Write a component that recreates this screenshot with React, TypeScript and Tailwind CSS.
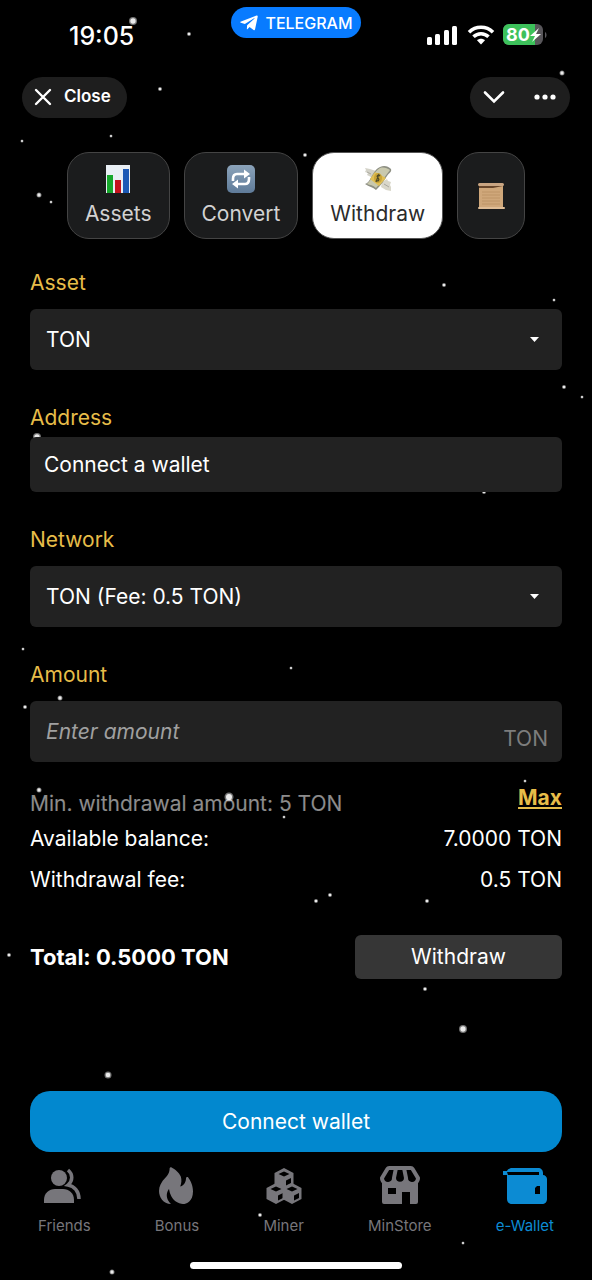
import type { ReactNode } from "react";
import { FaTelegramPlane } from "react-icons/fa";
import { BiSolidHot } from "react-icons/bi";

const stars = [
  [133, 21, 8], [189, 34, 4], [160, 89, 4], [22, 141, 3], [111, 136, 3], [562, 73, 5],
  [39, 195, 5], [51, 202, 3], [305, 155, 4], [444, 285, 4], [554, 300, 3], [564, 387, 4],
  [582, 397, 3], [37, 437, 8], [484, 492, 4], [23, 649, 3], [291, 668, 3], [60, 698, 5],
  [25, 707, 4], [39, 790, 5], [525, 781, 3], [229, 797, 9], [284, 817, 3], [316, 901, 4],
  [330, 895, 4], [427, 901, 4], [9, 955, 4], [425, 989, 4], [463, 1029, 8], [108, 1075, 7],
  [260, 1215, 4], [463, 1243, 3], [112, 1272, 5],
];

const Stars = () => (
  <svg className="pointer-events-none absolute left-0 top-0 h-[1280px] w-[592px]" viewBox="0 0 592 1280" aria-hidden="true">
    {stars.map(([x, y, d]) => (
      <g key={`${x}-${y}`} fill="#fff">
        <circle cx={x} cy={y} r={d / 2} opacity="0.45" />
        <circle cx={x} cy={y} r={d / 3} opacity="0.85" />
      </g>
    ))}
  </svg>
);

const StatusBar = () => (
  <header className="grid h-[70px] grid-cols-[1fr_auto_1fr] items-start">
    <time className="pl-[69px] pt-5 text-[25px] font-medium leading-8">19:05</time>
    <a href="#telegram" className="mt-[7px] flex h-[31px] items-center gap-[6px] rounded-full bg-[#087bff] px-2 text-[16px] font-medium">
      <FaTelegramPlane className="size-5" />
      TELEGRAM
    </a>
    <div className="flex items-center justify-end gap-2 pr-[45px] pt-6">
      <svg className="h-5 w-8" viewBox="0 0 32 20" fill="#fff" aria-label="Signal">
        <rect x="0" y="12" width="5" height="8" rx="1.5" />
        <rect x="8" y="9" width="5" height="11" rx="1.5" />
        <rect x="17" y="5" width="5" height="15" rx="1.5" />
        <rect x="25" y="1" width="5" height="19" rx="1.5" />
      </svg>
      <svg className="h-5 w-7" viewBox="0 0 28 20" fill="none" stroke="#fff" strokeWidth="3.6" aria-label="Wi-Fi">
        <path d="M2 7.2C8.8.6 19.2.6 26 7.2" />
        <path d="M6.5 11.8c4.3-4.1 10.7-4.1 15 0" />
        <path d="M10 15.3c2.4-2 5.6-2 8 0L14 19.4z" fill="#fff" stroke="none" />
      </svg>
      <svg className="h-[21px] w-11" viewBox="0 0 44 21" aria-label="Battery 80%">
        <defs>
          <clipPath id="cell"><rect width="40" height="21" rx="6" /></clipPath>
        </defs>
        <g clipPath="url(#cell)">
          <rect width="40" height="21" fill="#58565a" />
          <rect width="32" height="21" fill="#3dc15b" />
        </g>
        <path d="M42 8c2 1 2 5 0 6z" fill="#58565a" />
        <text x="3" y="17" fill="#fff" fontSize="18" fontWeight="700" className="font-['Inter']">80</text>
        <path d="M36 4l-9 8h5l-3 6 9-8h-5z" fill="#fff" />
      </svg>
    </div>
  </header>
);

const AppBar = () => (
  <div className="flex h-[54px] items-center justify-between px-[22px]">
    <button className="flex h-[41px] items-center gap-3 rounded-full bg-[#1e1e1e] pl-3 pr-4 text-[17px] font-semibold">
      <svg className="size-[18px]" viewBox="0 0 18 18" stroke="#fff" strokeWidth="2.4" strokeLinecap="round">
        <path d="M2 2l14 14M16 2L2 16" />
      </svg>
      Close
    </button>
    <div className="flex h-[41px] items-center gap-7 rounded-full bg-[#1e1e1e] px-3">
      <button aria-label="Minimize">
        <svg className="h-4 w-6" viewBox="0 0 24 16" fill="none" stroke="#fff" strokeWidth="2.6" strokeLinecap="round">
          <path d="M3 3.5l9 9 9-9" />
        </svg>
      </button>
      <button aria-label="More">
        <svg className="h-4 w-6" viewBox="0 0 24 16" fill="#fff">
          <circle cx="3" cy="8" r="2.6" />
          <circle cx="11" cy="8" r="2.6" />
          <circle cx="19" cy="8" r="2.6" />
        </svg>
      </button>
    </div>
  </div>
);

const ChartIcon = () => (
  <svg className="size-7" viewBox="0 0 28 28" aria-hidden="true">
    <rect x="2" width="24" height="28" fill="#e9eff5" />
    <rect x="3" y="10" width="6" height="18" fill="#16a82c" />
    <rect x="11" y="15" width="6" height="13" fill="#c3131c" />
    <rect x="19" y="4" width="6" height="24" fill="#1c59b5" />
  </svg>
);

const RepeatIcon = () => (
  <svg className="size-7" viewBox="0 0 28 28" aria-hidden="true">
    <defs>
      <linearGradient id="tile" x2="0" y2="1">
        <stop stopColor="#8ba3ba" />
        <stop offset="1" stopColor="#5f7b99" />
      </linearGradient>
    </defs>
    <rect width="28" height="28" rx="5" fill="url(#tile)" />
    <g fill="none" stroke="#fff" strokeWidth="2.6">
      <path d="M6 16v-2c0-3 1-5 4-5h8" />
      <path d="M22 12v2c0 3-1 5-4 5h-8" />
    </g>
    <path d="M17 4.5l6 4.5-6 4.500zM11 14.500L5 19l6 4.500z" fill="#fff" />
  </svg>
);

const MoneyIcon = () => (
  <svg className="size-7" viewBox="0 0 28 28" aria-hidden="true">
    <path d="M1 3l5 1 6 2-5 6-4-2 1-2-3-1 1-2z" fill="#d3d2c8" />
    <path d="M18 17l5-3 1 2 3 1-1 3 1 2v4l-5-1-5-3z" fill="#d9d7ca" />
    <path d="M3 7l4 2M20 19l5 3" stroke="#aaa89e" strokeWidth="1" />
    <path d="M16 2c4-2 8-1 11 2 1 3-2 4-4 7-3 5-6 9-11 14-3-3-7-3-11-6 5-2 5-6 8-10 2-3 3-5 7-7z" fill="#8d8f83" />
    <path d="M16 3c4-1 7 0 10 2-4 5-8 11-14 18-3-3-6-3-9-4 5-4 6-12 13-16z" fill="#c9c9ae" />
    <path d="M11 7l11 6-7 8L6 14z" fill="#e0bf54" />
    <ellipse cx="14" cy="13" rx="4" ry="5" fill="#c9a437" />
    <path d="M16 11c-2-2-4 0-2 2s0 4-2 2M15 9l-3 8" fill="none" stroke="#4f4a26" strokeWidth="1.2" />
  </svg>
);

const ScrollIcon = () => (
  <svg className="size-7" viewBox="0 0 28 28" aria-hidden="true">
    <path d="M2 3h24v22H2z" fill="#cfa77a" />
    <path d="M5 10h18M5 13h18M5 16h18M5 19h18M5 22h18" stroke="#b98f62" strokeWidth="0.8" />
    <rect x="1" y="1" width="26" height="3" rx="1.5" fill="#c9a582" />
    <path d="M2 4h24l-10 2H2z" fill="#68462a" />
    <rect x="1" y="25" width="27" height="2" rx="1" fill="#dfbd96" />
  </svg>
);

const tabs: { label: string; icon: ReactNode; active?: boolean }[] = [
  { label: "Assets", icon: <ChartIcon /> },
  { label: "Convert", icon: <RepeatIcon /> },
  { label: "Withdraw", icon: <MoneyIcon />, active: true },
];

const Tabs = () => (
  <nav className="mt-7 flex justify-center gap-[14px]">
    {tabs.map(({ label, icon, active }) => (
      <button
        key={label}
        className={`flex h-[87px] flex-col items-center gap-[5px] rounded-[22px] border px-[17px] pt-3 text-[21px] leading-8 ${
          active ? "border-[#555] bg-white text-[#2b2b2b]" : "border-[#444] bg-[#1b1c1d] text-[#d2d2d2]"
        }`}
      >
        {icon}
        {label}
      </button>
    ))}
    <button aria-label="History" className="flex h-[87px] items-center rounded-[22px] border border-[#444] bg-[#1b1c1d] px-[19px]">
      <ScrollIcon />
    </button>
  </nav>
);

const SelectField = ({ id, label, option }: { id: string; label: string; option: string }) => (
  <div>
    <label htmlFor={id} className="block leading-8 text-[#e7bd49]">{label}</label>
    <div className="relative mt-[10px]">
      <select id={id} className="h-[61px] w-full appearance-none rounded-md bg-[#222] px-4">
        <option>{option}</option>
      </select>
      <svg className="pointer-events-none absolute right-[22px] top-7 h-[6px] w-[11px]" viewBox="0 0 11 6" fill="#fff">
        <path d="M1 0h9L5.500 5z" />
      </svg>
    </div>
  </div>
);

const FriendsIcon = () => (
  <svg className="h-10 w-11" viewBox="0 0 44 40" fill="currentColor">
    <circle cx="17" cy="12" r="8" />
    <path d="M2 37v-3c0-7 5-11 11-11h8c6 0 11 4 11 11v3z" />
    <path d="M26 4c5 4 5 11 0 15 6 1 11 6 11 14" fill="none" stroke="currentColor" strokeWidth="3.5" />
  </svg>
);

// each cube is a hexagon with its top and right faces cut out
const cubes = [[18, 0], [10, 15], [26, 15]];

const MinerIcon = () => (
  <svg className="size-9" viewBox="0 0 36 36" fill="currentColor" fillRule="evenodd">
    {cubes.map(([x, y]) => (
      <path
        key={x}
        d={`M${x} ${y}l9.500 5v11l-9.500 5-9.500-5v-11zm0 3.500l-5.500 2.500 5.500 2.500 5.500-2.500zm2 9v5l5-2.500v-5z`}
      />
    ))}
  </svg>
);

const StoreIcon = () => (
  <svg className="-mx-1 size-12 shrink-0" viewBox="0 0 24 24" fill="currentColor">
    <path d="M22 8a1 1 0 0 0-.14-.51L19.150 2.970A2 2 0 0 0 17.430 2H6.570c-.7 0-1.360.370-1.720.970L2.140 7.490A1 1 0 0 0 2 8c0 1 .390 1.910 1 2.620V20a1 1 0 0 0 1 1h9v-6h4v6h3a1 1 0 0 0 1-1v-9.380c.610-.710 1-1.620 1-2.620zm-2.020.250A2 2 0 0 1 16 8l-.020-.2L15.220 4h2.210l2.550 4.250zM10 8.060L10.820 4h2.360l.81 4.060a2 2 0 0 1-3.990 0zM6.570 4h2.210L8.020 7.800 8 8a2 2 0 0 1-3.980.250L6.570 4zM10 16H6v-3h4v3z" />
  </svg>
);

const WalletIcon = () => (
  <svg className="h-10 w-11" viewBox="0 0 44 40" fill="currentColor">
    <path d="M0 5h4c1-2 3-3 5-3h26c3 0 5 2 5 5v2c2 0 4 2 4 4v20c0 3-2 5-5 5H9c-3 0-5-2-5-5V9H0z" />
    <path d="M4 6h32v3H5zM32 22l2-2h3v8h-5z" fill="#000" />
  </svg>
);

const navItems = [
  { label: "Friends", icon: <FriendsIcon /> },
  { label: "Bonus", icon: <BiSolidHot className="-mx-1 size-12 shrink-0" /> },
  { label: "Miner", icon: <MinerIcon /> },
  { label: "MinStore", icon: <StoreIcon /> },
  { label: "e-Wallet", icon: <WalletIcon />, active: true },
];

export default function App() {
  return (
    <div className="relative flex min-h-screen flex-col overflow-hidden bg-black font-['Inter',sans-serif] text-[21px] text-white">
      <Stars />
      <StatusBar />
      <AppBar />
      <Tabs />
      <main className="relative px-[30px] pt-7">
        <SelectField id="asset" label="Asset" option="TON" />
        <div className="mt-8">
          <label htmlFor="address" className="block leading-8 text-[#e7bd49]">Address</label>
          <input id="address" readOnly value="Connect a wallet" className="mt-[3px] block h-[55px] w-full rounded-md bg-[#222] px-[14px]" />
        </div>
        <div className="mt-8">
          <SelectField id="network" label="Network" option="TON (Fee: 0.5 TON)" />
        </div>
        <div className="mt-8">
          <label htmlFor="amount" className="block leading-8 text-[#e7bd49]">Amount</label>
          <div className="mt-[10px] flex h-[61px] rounded-md bg-[#222] pl-4 pr-[14px]">
            <input id="amount" placeholder="Enter amount" className="min-w-0 flex-1 bg-transparent placeholder:italic placeholder:text-[#a0a0a0]" />
            <span className="pt-[22px] leading-8 text-[#7d7d7d]">TON</span>
          </div>
        </div>
        <div className="mt-5 flex items-start justify-between">
          <p className="pt-[6px] leading-8 text-white/55">Min. withdrawal amount: 5 TON</p>
          <button className="font-bold leading-8 text-[#e7bd49] underline underline-offset-2">Max</button>
        </div>
        <dl className="mt-[3px] space-y-[9px] leading-8">
          <div className="flex justify-between">
            <dt>Available balance:</dt>
            <dd>7.0000 TON</dd>
          </div>
          <div className="flex justify-between">
            <dt>Withdrawal fee:</dt>
            <dd>0.5 TON</dd>
          </div>
        </dl>
        <div className="mt-[39px] flex items-center justify-between">
          <strong className="text-[22px] font-bold">Total: 0.5000 TON</strong>
          <button className="h-11 w-[207px] rounded-md bg-[#363636]">Withdraw</button>
        </div>
      </main>
      <footer className="relative mt-auto">
        <div className="px-[30px]">
          <button className="h-[61px] w-full rounded-[20px] bg-[#0288cf]">Connect wallet</button>
        </div>
        <nav className="mt-[14px] flex justify-between px-[38px]">
          {navItems.map(({ label, icon, active }) => (
            <a key={label} href={`#${label}`} className={`flex flex-col items-center text-[15px] ${active ? "text-[#0c8bd3]" : "text-[#77767b]"}`}>
              <span className="flex h-10 items-center">{icon}</span>
              <span className="mt-[10px] leading-5">{label}</span>
            </a>
          ))}
        </nav>
        <div className="mx-auto mb-[11px] mt-[26px] h-[7px] w-[212px] rounded-full bg-white" />
      </footer>
    </div>
  );
}
